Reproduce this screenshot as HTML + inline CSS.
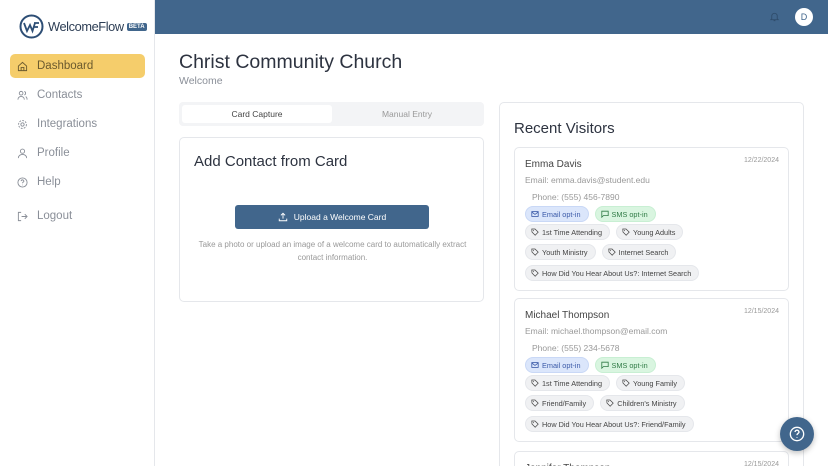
<!DOCTYPE html>
<html><head><meta charset="utf-8"><style>
*{box-sizing:border-box;margin:0;padding:0}
html,body{width:828px;height:466px;overflow:hidden}
body{background:#fff;font-family:"Liberation Sans",sans-serif;color:#333;position:relative}
.sb{position:absolute;left:0;top:0;width:155px;height:466px;border-right:1px solid #e5e7eb;background:#fff;z-index:2}
.logo{position:absolute;left:19px;top:14px;display:flex;align-items:center;white-space:nowrap}
.logo span.t{font-size:12.8px;color:#2d3e55;margin-left:4px;letter-spacing:-0.4px}
.beta{font-size:6px;background:#41668c;color:#fff;border-radius:2px;padding:1px 2px;margin-left:3px;font-weight:bold}
.nav{position:absolute;left:10px;width:135px;height:24px;display:flex;align-items:center;font-size:11.5px;color:#8a8f98;padding-left:7px}
.nav svg{margin-right:9px}
.nav.act{background:#f5cd6b;border-radius:5px;color:#6b5a2e}
.top{position:absolute;left:155px;top:0;width:673px;height:34px;background:#41668c}
.av{position:absolute;right:15px;top:8px;width:18px;height:18px;border-radius:50%;background:#fff;color:#41668c;font-size:9px;text-align:center;line-height:18px}
h1{position:absolute;left:179px;top:51px;font-size:19.5px;font-weight:normal;color:#2d3340}
.wel{position:absolute;left:179px;top:75px;font-size:10.5px;color:#8a8f98}
.tabs{position:absolute;left:179px;top:102px;width:305px;height:24px;background:#f3f4f6;border-radius:4px}
.tab1{position:absolute;left:3px;top:3px;width:150px;height:18px;background:#fff;border-radius:3px;font-size:8.5px;text-align:center;line-height:18px;color:#444}
.tab2{position:absolute;left:153px;top:3px;width:150px;height:18px;font-size:8.5px;text-align:center;line-height:18px;color:#999}
.card{position:absolute;left:179px;top:137px;width:305px;height:165px;border:1px solid #e5e7eb;border-radius:5px}
.card h2{position:absolute;left:14px;top:15px;font-size:15px;font-weight:normal;color:#2d3340}
.btn{position:absolute;left:55px;top:67px;width:194px;height:24px;background:#41668c;border-radius:3px;color:#fff;font-size:8.5px;display:flex;align-items:center;justify-content:center}
.btn svg{margin-right:6px}
.desc{position:absolute;left:10px;top:101px;width:285px;text-align:center;font-size:8px;line-height:12.5px;color:#999}
.rp{position:absolute;left:499px;top:102px;width:305px;height:364px;border:1px solid #e5e7eb;border-bottom:none;border-radius:5px 5px 0 0;overflow:hidden}
.rp h3{position:absolute;left:14px;top:17px;font-size:15px;font-weight:normal;color:#2d3340}
.vc{position:absolute;left:14px;width:275px;border:1px solid #e5e7eb;border-radius:5px;height:144px}
.nm{position:absolute;left:10px;top:11px;font-size:10px;color:#444}
.dt{position:absolute;right:9px;top:9px;font-size:7px;color:#999}
.em{position:absolute;left:10px;top:27px;font-size:8.5px;color:#999}
.ph{position:absolute;left:17px;top:44px;font-size:8.5px;color:#999}
.row{position:absolute;left:10px;display:flex;gap:6px}
.pill{height:16px;border-radius:8px;font-size:7.3px;display:flex;align-items:center;padding:0 7px 0 5px;background:#f0f1f3;color:#444;border:1px solid #e5e7eb;white-space:nowrap}
.pill svg{margin-right:3px}
.pe{background:#dbe6fb;color:#3b5aa8;border-color:#c9d8f6}
.ps{background:#d9f5e0;color:#2f7a45;border-color:#c8efd3}
.help{position:absolute;left:780px;top:417px;width:34px;height:34px;border-radius:50%;background:#41668c;box-shadow:0 2px 6px rgba(0,0,0,.25);display:flex;align-items:center;justify-content:center}
</style></head><body>
<svg width="0" height="0" style="position:absolute"><defs><symbol id="tg" viewBox="0 0 10 10"><path d="M1 1.2H5L9 5.2 5.2 9 1.2 5Z" fill="none" stroke="currentColor" stroke-width="0.9"/><circle cx="3.2" cy="3.3" r="0.6" fill="currentColor"/></symbol></defs></svg>
<div class="sb">
 <div class="logo"><svg width="25" height="25" viewBox="0 0 25 25"><circle cx="12.5" cy="12.5" r="11" fill="none" stroke="#2d4e75" stroke-width="2"/><path d="M5 9 L8 17 L11 11 L13.5 17 L16 9 M15 9 H20 M15.5 13 H19" fill="none" stroke="#2d4e75" stroke-width="1.8"/></svg><span class="t">WelcomeFlow</span><span class="beta">BETA</span></div>
 <div class="nav act" style="top:54px"><svg width="11" height="11" viewBox="0 0 12 12" fill="none" stroke="#6b5a2e" stroke-width="1"><path d="M1.5 5.5 6 1.5 10.5 5.5V10.5H1.5Z M4.5 10.5V7H7.5V10.5"/></svg>Dashboard</div>
 <div class="nav" style="top:83px"><svg width="11" height="11" viewBox="0 0 12 12" fill="none" stroke="#8a8f98" stroke-width="1"><circle cx="4.5" cy="3.5" r="2"/><path d="M1 10.5c0-2 1.5-3.5 3.5-3.5S8 8.5 8 10.5M8 1.6a2 2 0 010 3.8M9.5 7.2c1 .5 1.5 1.8 1.5 3.3"/></svg>Contacts</div>
 <div class="nav" style="top:112px"><svg width="11" height="11" viewBox="0 0 12 12" fill="none" stroke="#8a8f98" stroke-width="1"><circle cx="6" cy="6" r="1.8"/><circle cx="6" cy="6" r="4.3" stroke-dasharray="2 1.3"/></svg>Integrations</div>
 <div class="nav" style="top:141px"><svg width="11" height="11" viewBox="0 0 12 12" fill="none" stroke="#8a8f98" stroke-width="1"><circle cx="6" cy="3.5" r="2.3"/><path d="M1.5 11c0-2.5 2-4 4.5-4s4.5 1.5 4.5 4"/></svg>Profile</div>
 <div class="nav" style="top:170px"><svg width="11" height="11" viewBox="0 0 12 12" fill="none" stroke="#8a8f98" stroke-width="1"><circle cx="6" cy="6" r="5"/><path d="M4.5 4.5a1.5 1.5 0 113 .3c-.3.7-1.5.9-1.5 2M6 8.5v.5"/></svg>Help</div>
 <div class="nav" style="top:204px"><svg width="11" height="11" viewBox="0 0 12 12" fill="none" stroke="#8a8f98" stroke-width="1"><path d="M4.5 1.5H1.5V10.5H4.5M5 6H11M8.5 3.5 11 6 8.5 8.5"/></svg>Logout</div>
</div>
<div class="top"><svg style="position:absolute;left:614px;top:11px" width="11" height="11" viewBox="0 0 12 12" fill="none" stroke="#2f4d6c" stroke-width="1"><path d="M3 8.5V5.5a3 3 0 016 0v3l1 1H2zM5 10.5h2"/></svg><div class="av">D</div></div>
<h1>Christ Community Church</h1>
<div class="wel">Welcome</div>
<div class="tabs"><div class="tab1">Card Capture</div><div class="tab2">Manual Entry</div></div>
<div class="card"><h2>Add Contact from Card</h2>
 <div class="btn"><svg width="10" height="10" viewBox="0 0 12 12" fill="none" stroke="#fff" stroke-width="1.1"><path d="M6 8V1.5M3.5 4 6 1.5 8.5 4M1.5 8v2.5h9V8"/></svg>Upload a Welcome Card</div>
 <div class="desc">Take a photo or upload an image of a welcome card to automatically extract contact information.</div>
</div>
<div class="rp"><h3>Recent Visitors</h3>
 <div class="vc" style="top:44px">
  <div class="nm">Emma Davis</div><div class="dt">12/22/2024</div>
  <div class="em">Email: emma.davis@student.edu</div><div class="ph">Phone: (555) 456-7890</div>
  <div class="row" style="top:58px"><div class="pill pe"><svg width="8" height="8" viewBox="0 0 10 10" fill="none" stroke="currentColor"><rect x="1" y="2" width="8" height="6"/><path d="M1 2.5 5 5.5 9 2.5"/></svg>Email opt-in</div><div class="pill ps"><svg width="8" height="8" viewBox="0 0 10 10" fill="none" stroke="currentColor"><path d="M1 1.5H9V7H3L1 9Z"/></svg>SMS opt-in</div></div>
  <div class="row" style="top:76px"><div class="pill"><svg width="8" height="8"><use href="#tg"/></svg>1st Time Attending</div><div class="pill"><svg width="8" height="8"><use href="#tg"/></svg>Young Adults</div></div>
  <div class="row" style="top:96px"><div class="pill"><svg width="8" height="8"><use href="#tg"/></svg>Youth Ministry</div><div class="pill"><svg width="8" height="8"><use href="#tg"/></svg>Internet Search</div></div>
  <div class="row" style="top:117px"><div class="pill"><svg width="8" height="8"><use href="#tg"/></svg>How Did You Hear About Us?: Internet Search</div></div>
 </div>
 <div class="vc" style="top:195px">
  <div class="nm">Michael Thompson</div><div class="dt">12/15/2024</div>
  <div class="em">Email: michael.thompson@email.com</div><div class="ph">Phone: (555) 234-5678</div>
  <div class="row" style="top:58px"><div class="pill pe"><svg width="8" height="8" viewBox="0 0 10 10" fill="none" stroke="currentColor"><rect x="1" y="2" width="8" height="6"/><path d="M1 2.5 5 5.5 9 2.5"/></svg>Email opt-in</div><div class="pill ps"><svg width="8" height="8" viewBox="0 0 10 10" fill="none" stroke="currentColor"><path d="M1 1.5H9V7H3L1 9Z"/></svg>SMS opt-in</div></div>
  <div class="row" style="top:76px"><div class="pill"><svg width="8" height="8"><use href="#tg"/></svg>1st Time Attending</div><div class="pill"><svg width="8" height="8"><use href="#tg"/></svg>Young Family</div></div>
  <div class="row" style="top:96px"><div class="pill"><svg width="8" height="8"><use href="#tg"/></svg>Friend/Family</div><div class="pill"><svg width="8" height="8"><use href="#tg"/></svg>Children's Ministry</div></div>
  <div class="row" style="top:117px"><div class="pill"><svg width="8" height="8"><use href="#tg"/></svg>How Did You Hear About Us?: Friend/Family</div></div>
 </div>
 <div class="vc" style="top:348px;height:30px"><div class="nm">Jennifer Thompson</div><div class="dt">12/15/2024</div></div>
</div>
<div class="help"><svg width="16" height="16" viewBox="0 0 12 12" fill="none" stroke="#fff" stroke-width="1"><circle cx="6" cy="6" r="5"/><path d="M4.5 4.5a1.5 1.5 0 113 .3c-.3.7-1.5.9-1.5 2M6 8.5v.5"/></svg></div>
</body></html>
